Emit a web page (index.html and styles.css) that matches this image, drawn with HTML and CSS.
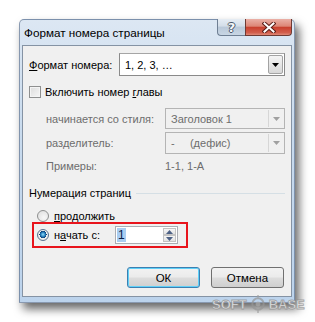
FILE: index.html
```html
<!DOCTYPE html>
<html>
<head>
<meta charset="utf-8">
<link rel="stylesheet" href="styles.css">
</head>
<body>
<div class="window">
  <div class="titlebar">
    <span class="title">Формат номера страницы</span>
    <div class="caption-btns">
      <div class="cbtn help"><span class="qmark">?</span></div>
      <div class="cbtn close">
        <svg width="14" height="11" viewBox="0 0 14 11"><path d="M2.5 1.5 L11.5 9.5 M11.5 1.5 L2.5 9.5" stroke="#5a1e18" stroke-width="4" stroke-linecap="square"/><path d="M2.5 1.5 L11.5 9.5 M11.5 1.5 L2.5 9.5" stroke="#ffffff" stroke-width="2" stroke-linecap="square"/></svg>
      </div>
    </div>
  </div>
  <div class="client">
    <div class="row r-format">
      <span class="label"><u>Ф</u>ормат номера:</span>
      <div class="combo main">
        <span class="ctext">1, 2, 3, …</span>
        <div class="drop"><svg width="7" height="4" viewBox="0 0 7 4"><path d="M0 0 H7 L3.5 4 Z" fill="#000"/></svg></div>
      </div>
    </div>
    <div class="row r-check">
      <span class="checkbox"></span>
      <span>Включить номер <u>г</u>лавы</span>
    </div>
    <div class="row r-style dis">
      <span class="label2">начинается со стиля:</span>
      <div class="combo disabled">
        <span class="ctext">Заголовок 1</span>
        <div class="drop"><svg width="7" height="4" viewBox="0 0 7 4"><path d="M0 0 H7 L3.5 4 Z" fill="#a0a0a0"/></svg></div>
      </div>
    </div>
    <div class="row r-sep dis">
      <span class="label2">разделитель:</span>
      <div class="combo disabled">
        <span class="ctext">-&nbsp;&nbsp;&nbsp;&nbsp;&nbsp;(дефис)</span>
        <div class="drop"><svg width="7" height="4" viewBox="0 0 7 4"><path d="M0 0 H7 L3.5 4 Z" fill="#a0a0a0"/></svg></div>
      </div>
    </div>
    <div class="row r-ex dis">
      <span class="label2">Примеры:</span>
      <span>1-1, 1-A</span>
    </div>
    <div class="group">
      <span>Нумерация страниц</span>
      <span class="gline"></span>
    </div>
    <div class="row r-radio1">
      <span class="radio"></span>
      <span><u>п</u>родолжить</span>
    </div>
    <div class="highlight">
      <span class="radio checked"></span>
      <span class="rlabel">н<u>а</u>чать с:</span>
      <div class="spin">
        <span class="sval">1</span>
        <div class="sbtns">
          <div class="sbtn"><svg width="7" height="4" viewBox="0 0 7 4"><path d="M0 4 H7 L3.5 0 Z" fill="#4d6185"/></svg></div>
          <div class="sbtn"><svg width="7" height="4" viewBox="0 0 7 4"><path d="M0 0 H7 L3.5 4 Z" fill="#4d6185"/></svg></div>
        </div>
      </div>
    </div>
    <div class="buttons">
      <div class="btn default">ОК</div>
      <div class="btn">Отмена</div>
    </div>
  </div>
</div>
<div class="watermark">
  <span>SOFT</span>
  <svg width="18" height="18" viewBox="0 0 22 22"><circle cx="11" cy="11" r="7" fill="none" stroke="rgba(150,150,150,0.7)" stroke-width="2.5"/><circle cx="11" cy="11" r="3" fill="rgba(170,170,170,0.7)"/><path d="M11 0 V3 M11 19 V22" stroke="rgba(160,160,160,0.7)" stroke-width="2"/></svg>
  <span>BASE</span>
</div>
</body>
</html>
```

FILE: styles.css
```css
html, body {
  margin: 0;
  padding: 0;
}
body {
  width: 315px;
  height: 322px;
  overflow: hidden;
  position: relative;
  background: #ffffff;
  font-family: "Liberation Sans", Arial, sans-serif;
  font-size: 11px;
  color: #000;
}
u { text-decoration: underline; text-underline-offset: 1px; }
span { white-space: nowrap; }

.window {
  margin: 19px 0 0 19px;
  width: 276px;
  height: 284px;
  box-sizing: border-box;
  border: 1px solid rgba(70, 90, 120, 0.55);
  border-radius: 5px 5px 0 0;
  background: linear-gradient(#dce7f3, #c9dbee 40%, #bcd3ec);
  padding: 0 2px 5px 2px;
  display: flex;
  flex-direction: column;
  box-shadow: 4px 6px 10px rgba(0, 0, 0, 0.6);
}

.titlebar {
  height: 25px;
  display: flex;
  align-items: center;
  flex-shrink: 0;
}
.title {
  padding-left: 2px;
  font-size: 11.7px;
  flex: 1;
}
.caption-btns {
  display: flex;
  align-self: flex-start;
  margin-top: -1px;
  height: 17px;
}
.cbtn {
  box-sizing: border-box;
  height: 17px;
  display: flex;
  align-items: center;
  justify-content: center;
}
.help {
  width: 28px;
  border: 1px solid #6f7f93;
  border-top: none;
  border-right: none;
  border-radius: 0 0 0 4px;
  background: linear-gradient(#e6edf4, #d3dde8 45%, #b9c8d8 50%, #c8d6e4);
}
.qmark {
  font-family: "DejaVu Sans", sans-serif;
  font-weight: bold;
  font-size: 13px;
  color: #f4f6f9;
  text-shadow: 1px 0 0 #4a5668, -1px 0 0 #4a5668, 0 1px 0 #4a5668, 0 -1px 0 #4a5668;
  line-height: 1;
}
.close {
  width: 47px;
  border: 1px solid #6e3a33;
  border-top: none;
  border-radius: 0 0 4px 0;
  background: linear-gradient(#eab0a6, #dd8676 45%, #c9402e 52%, #d25e4c 85%, #e08a78);
}

.client {
  flex: 1;
  background: #f0f0f0;
  border: 1px solid #8593a4;
  padding: 7px 6px 0 6px;
  display: flex;
  flex-direction: column;
}

.row {
  display: flex;
  align-items: center;
  flex-shrink: 0;
}
.dis { color: #6d6d6d; }

.r-format { height: 23px; }
.label { width: 90px; flex-shrink: 0; }
.combo {
  flex: 1;
  height: 100%;
  box-sizing: border-box;
  display: flex;
  align-items: center;
  padding: 1px;
}
.combo .ctext { flex: 1; padding-left: 4px; }
.combo.main {
  border: 1px solid #8a8a8a;
  border-top-color: #a5a5a5;
  background: #fff;
}
.drop {
  width: 15px;
  height: 100%;
  box-sizing: border-box;
  display: flex;
  align-items: center;
  justify-content: center;
}
.main .drop {
  border: 1px solid #a3a3a3;
  background: linear-gradient(#f4f4f4, #e6e6e6 50%, #d8d8d8);
  border-radius: 2px;
}
.combo.disabled {
  border: 1px solid #b4b4b4;
  background: #f0f0f0;
}
.disabled .drop {
  border-left: 1px solid #d6d6d6;
}

.r-check { height: 12px; margin-top: 10px; }
.checkbox {
  width: 12px;
  height: 12px;
  box-sizing: border-box;
  border: 1px solid #8e8f8f;
  background: linear-gradient(135deg, #dcdcdc, #f6f6f6);
  box-shadow: inset 0 0 0 1px #f4f4f4;
  margin-right: 4px;
}

.r-style { height: 21px; margin-top: 10px; }
.label2 { width: 119px; padding-left: 17px; flex-shrink: 0; box-sizing: border-box; width: 136px; }
.r-sep { height: 22px; margin-top: 3px; }
.r-ex { height: 14px; margin-top: 5px; }

.group {
  display: flex;
  align-items: center;
  height: 14px;
  margin-top: 13px;
  flex-shrink: 0;
}
.gline {
  flex: 1;
  height: 1px;
  background: #d5dfe5;
  margin-left: 5px;
}

.r-radio1 { height: 12px; margin-top: 10px; padding-left: 8px; }
.radio {
  width: 12px;
  height: 12px;
  box-sizing: border-box;
  border-radius: 50%;
  border: 1px solid #8e8f8f;
  background: radial-gradient(circle at 60% 65%, #f7f7f7, #dcdcdc);
  margin-right: 5px;
  flex-shrink: 0;
}
.radio.checked {
  border-color: #5a7391;
  background: radial-gradient(circle at 50% 45%, #8ee0ff 0, #1d70b0 2.5px, #0d3d72 3.5px, #f2f2f2 3.6px, #dcdcdc);
}

.highlight {
  margin-left: 3px;
  width: 156px;
  height: 26px;
  box-sizing: border-box;
  border: 2px solid #e8141c;
  display: flex;
  align-items: center;
  padding-left: 3px;
  flex-shrink: 0;
}
.rlabel { width: 61px; }
.spin {
  width: 63px;
  height: 18px;
  box-sizing: border-box;
  border: 1px solid #abadb3;
  background: #fff;
  display: flex;
  align-items: center;
  padding: 1px;
}
.sval {
  flex: 1;
  padding-left: 1px;
  font-size: 12px;
  background: linear-gradient(90deg, #a9cdf1 0, #a9cdf1 9px, transparent 9px);
  color: #0a2045;
}
.sbtns {
  width: 13px;
  height: 100%;
  display: flex;
  flex-direction: column;
}
.sbtn {
  flex: 1;
  box-sizing: border-box;
  border: 1px solid #c3c3c3;
  background: linear-gradient(#f6f6f6, #e2e2e2);
  display: flex;
  align-items: center;
  justify-content: center;
}

.buttons {
  display: flex;
  justify-content: flex-end;
  gap: 11px;
  margin-top: 19px;
  margin-right: 1px;
  flex-shrink: 0;
}
.btn {
  width: 73px;
  height: 21px;
  box-sizing: border-box;
  border: 1px solid #707070;
  border-radius: 3px;
  background: linear-gradient(#f2f2f2, #ebebeb 48%, #dddddd 52%, #cfcfcf);
  display: flex;
  align-items: center;
  justify-content: center;
  font-size: 11.5px;
}
.btn.default {
  border-color: #3c7fb1;
  box-shadow: inset 0 0 0 1px #5fd0f8;
}

.watermark {
  position: absolute;
  left: 212px;
  top: 295px;
  display: flex;
  align-items: center;
  gap: 2px;
  font-family: "Liberation Sans", Arial, sans-serif;
  font-weight: bold;
  font-size: 13px;
  color: rgba(240, 240, 240, 0.85);
  -webkit-text-stroke: 0.8px rgba(140, 140, 140, 0.75);
}
```
